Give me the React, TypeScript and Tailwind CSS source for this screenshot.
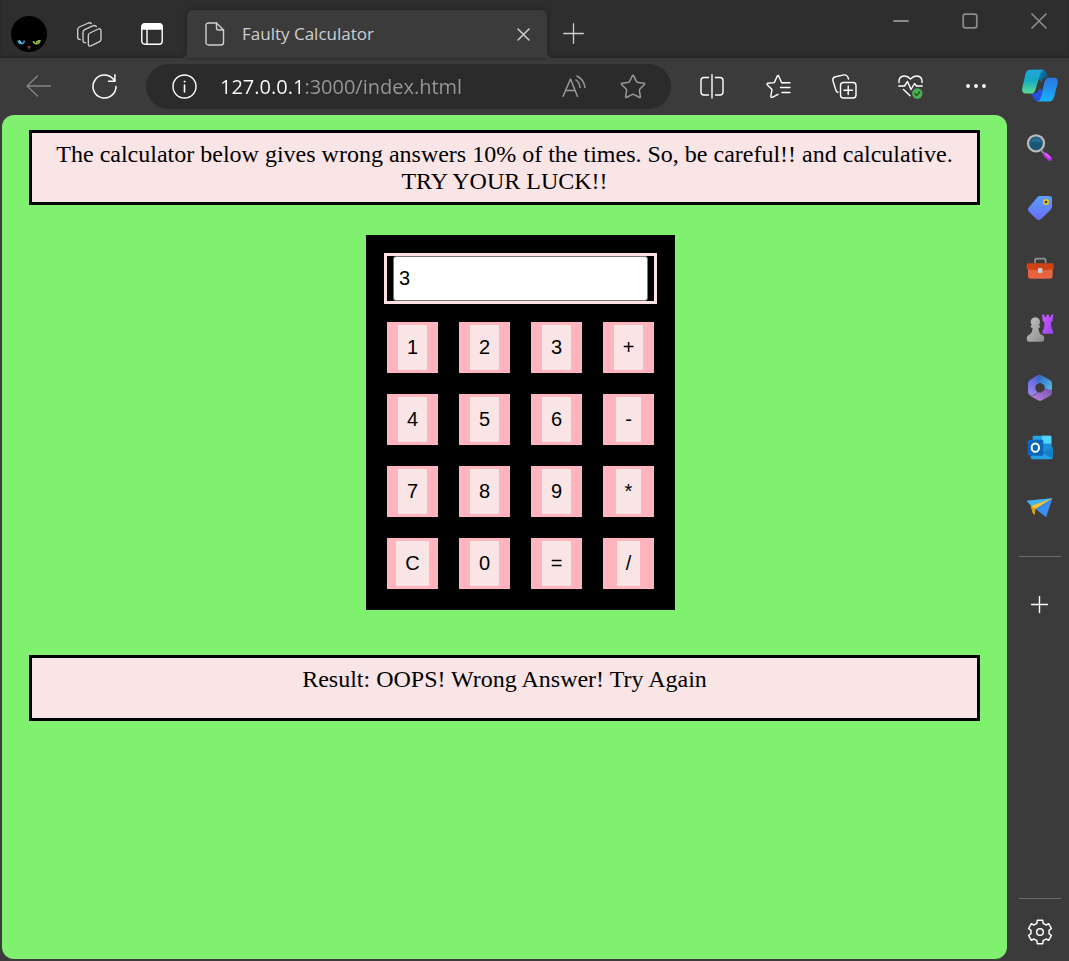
import { useState, type ReactNode } from "react";
import { Star } from "lucide-react";

type IconProps = { w: number; h: number; box: string; children: ReactNode; sw?: number };

function Icon({ w, h, box, children, sw = 1.3 }: IconProps) {
  return (
    <svg
      width={w}
      height={h}
      viewBox={box}
      fill="none"
      stroke="currentColor"
      strokeWidth={sw}
      strokeLinecap="round"
      strokeLinejoin="round"
      aria-hidden="true"
      className="shrink-0"
    >
      {children}
    </svg>
  );
}

function ToolButton({ label, children, className = "" }: { label: string; children: ReactNode; className?: string }) {
  return (
    <button type="button" aria-label={label} className={`flex h-11 w-[66px] shrink-0 items-center justify-center text-white ${className}`}>
      {children}
    </button>
  );
}

function Avatar() {
  return (
    <svg width="36" height="36" viewBox="0 0 36 36" aria-hidden="true">
      <circle cx="18" cy="18" r="18" fill="#000" />
      <path d="M7 24.500Q7.500 28 11 27.800Q13.500 27 13 24.500" fill="none" stroke="#2f9fd4" strokeWidth="1.600" />
      <path d="M8 24.500L10.500 27" fill="none" stroke="#9ae2fa" strokeWidth="1.200" />
      <path d="M29 24Q28.500 28 25 27.800Q22.500 27 22.500 25" fill="none" stroke="#8fc02f" strokeWidth="1.600" />
      <path d="M28 24.500L25 26.500" fill="none" stroke="#cdf56a" strokeWidth="1.200" />
      <path d="M15.800 30.200H20.200L18 32.500Z" fill="#a04a46" />
      <path d="M18 32V34" stroke="#6e302d" strokeWidth="1" />
    </svg>
  );
}

function TabStrip() {
  return (
    <header className="flex h-[58px] bg-[#2e2e2e] text-[#cfcfcf] shadow-[inset_0_-2px_2px_#262626]">
      <button type="button" aria-label="Profile" className="flex w-[58px] shrink-0 items-center pt-[10px] pl-[11px]">
        <Avatar />
      </button>
      <button type="button" aria-label="Workspaces" className="flex w-[62px] shrink-0 items-center justify-center pt-[10px]">
        <Icon w={25} h={25} box="0 0 75 75" sw={4}>
          <path d="M39 33L64 21Q72 18 72 27V52Q72 57 68 59L43 71Q34 75 34 66V40Q34 35 39 33Z" />
          <path d="M26 62Q18 63 18 54V31Q18 26 23 23L49 11Q55 9 58 14" />
          <path d="M10 53Q2 53 2 45V23Q2 18 7 15L34 3Q40 1 43 5" />
        </Icon>
      </button>
      <button type="button" aria-label="Tab actions" className="mr-[3px] flex w-16 shrink-0 items-center justify-center pt-[10px] text-white">
        <Icon w={22} h={22} box="0 0 22 22" sw={1.4}>
          <rect x="0.8" y="0.8" width="20.400" height="20.400" rx="3" />
          <path d="M1 6V4Q1 1 4 1H18Q21 1 21 4V6Z" fill="currentColor" />
          <path d="M6 7V21" />
        </Icon>
      </button>
      <div className="relative mt-[10px] flex w-[360px] min-w-0 items-center rounded-t-md bg-[#3b3b3b] pr-[15px] pl-[18px] shadow-[0_0_4px_#1c1c1c]">
        <span className="absolute bottom-0 -left-[5px] size-[5px] bg-[radial-gradient(circle_at_0_0,#2a2a2a_5px,#3b3b3b_5px)]" />
        <span className="absolute -right-[5px] bottom-0 size-[5px] bg-[radial-gradient(circle_at_100%_0,#2a2a2a_5px,#3b3b3b_5px)]" />
        <Icon w={20} h={24} box="0 0 20 24" sw={1.4}>
          <path d="M3.500 1H11.500L18.500 8V20.500Q18.500 23 16 23H3.500Q1 23 1 20.500V3.500Q1 1 3.500 1Z" />
          <path d="M11.500 1V6Q11.500 8 13.500 8H18.500" />
        </Icon>
        <span className="ml-[17px] flex-1 truncate font-['Open_Sans','Noto_Sans',sans-serif] text-[17px]">Faulty Calculator</span>
        <button type="button" aria-label="Close tab" className="p-[2px]">
          <Icon w={13} h={13} box="0 0 13 13" sw={1.5}>
            <path d="M1 1L12 12M12 1L1 12" />
          </Icon>
        </button>
      </div>
      <button type="button" aria-label="New tab" className="flex w-[52px] shrink-0 items-center justify-center pt-2">
        <Icon w={21} h={21} box="0 0 21 21">
          <path d="M10.500 0.700V20.300M0.700 10.500H20.300" />
        </Icon>
      </button>
      <div className="ml-auto flex shrink-0 items-start gap-[53px] pt-[13px] pr-[22px] text-[#8b8b8b]">
        <button type="button" aria-label="Minimize">
          <Icon w={16} h={16} box="0 0 16 16" sw={1.8}>
            <path d="M1 8H15" />
          </Icon>
        </button>
        <button type="button" aria-label="Maximize">
          <Icon w={16} h={16} box="0 0 16 16" sw={1.7}>
            <rect x="1.200" y="1.200" width="13.600" height="13.600" rx="2" />
          </Icon>
        </button>
        <button type="button" aria-label="Close">
          <Icon w={16} h={16} box="0 0 16 16" sw={1.7}>
            <path d="M1 1L15 15M15 1L1 15" />
          </Icon>
        </button>
      </div>
    </header>
  );
}

function Copilot() {
  return (
    <svg width="36" height="33" viewBox="0 0 108 98" aria-hidden="true">
      <defs>
        <linearGradient id="cpA" x1="0" y1="0" x2="0" y2="1">
          <stop offset="0" stopColor="#22a5dc" />
          <stop offset="0.450" stopColor="#16a9c4" />
          <stop offset="1" stopColor="#5edc8c" />
        </linearGradient>
        <linearGradient id="cpB" x1="0" y1="0" x2="0" y2="1">
          <stop offset="0" stopColor="#2f74dd" />
          <stop offset="1" stopColor="#17b1fb" />
        </linearGradient>
        <linearGradient id="cpC" x1="0" y1="0" x2="1" y2="0.600">
          <stop offset="0" stopColor="#1690cf" />
          <stop offset="1" stopColor="#0d5378" />
        </linearGradient>
      </defs>
      <path d="M40 2H60Q70 2 74 13L79 26H70Q62 26 58 40L50 30Z" fill="url(#cpC)" />
      <path d="M26 72H40Q48 71 52 58L60 60L58 96H47Q37 96 33 83Q31 75 26 72Z" fill="#2350dc" />
      <path d="M22 2H66Q58 4 54 17L40 63Q37 73 26 73H12Q-3 72 1 55L10 16Q13 3 22 2Z" fill="url(#cpA)" />
      <path d="M82 26H96Q110 27 107 42L96 84Q92 96 82 97H46Q54 95 57 83L68 37Q71 26 82 26Z" fill="url(#cpB)" />
    </svg>
  );
}

function Toolbar() {
  return (
    <nav aria-label="Browser toolbar" className="flex h-[57px] items-center bg-[#3b3b3b] pl-[5px]">
      <ToolButton label="Back" className="pb-[2px]">
        <Icon w={25} h={22} box="0 0 25 22">
          <path d="M24.500 11H1M11.500 1L1 11L11.500 21" stroke="#858585" />
        </Icon>
      </ToolButton>
      <ToolButton label="Refresh">
        <Icon w={25} h={25} box="0 0 25 25" sw={1.5}>
          <path d="M24 12.500A11.500 11.500 0 1 1 21 4.800L22.800 7" />
          <path d="M22.900 0.800V7.200H16.500" />
        </Icon>
      </ToolButton>
      <div className="ml-[9px] flex h-[45px] min-w-0 flex-1 items-center rounded-full bg-[#2b2b2b] pr-6 pl-[26px]">
        <button type="button" aria-label="Site information" className="text-white">
          <Icon w={25} h={25} box="0 0 25 25" sw={1.4}>
            <circle cx="12.500" cy="12.500" r="11.500" />
            <path d="M12.500 11V18" strokeWidth="1.600" />
            <circle cx="12.500" cy="7.600" r="0.600" fill="currentColor" strokeWidth="0.800" />
          </Icon>
        </button>
        <input
          aria-label="Address"
          defaultValue="127.0.0.1:3000/index.html"
          className="ml-[23px] min-w-0 flex-1 bg-[linear-gradient(90deg,#fff_83px,#989898_83px)] bg-clip-text font-['Open_Sans','Noto_Sans',sans-serif] text-[20px] text-transparent outline-none"
        />
        <button type="button" aria-label="Read aloud" className="pb-[2px] text-[#989898]">
          <Icon w={25} h={22} box="0 0 25 22" sw={1.5}>
            <path d="M1 21.500L8.500 4L15.500 21.500M3.500 15.500H13.300" />
            <path d="M14 5Q17.500 7.500 18 12.500M15 1Q22 4.500 23 12.500" />
          </Icon>
        </button>
        <button type="button" aria-label="Add to favorites" className="ml-8 text-[#989898]">
          <Star size={28} strokeWidth={1.3} />
        </button>
      </div>
      <div className="ml-2 flex shrink-0">
        <ToolButton label="Split screen">
          <Icon w={24} h={25} box="0 0 24 25" sw={1.4}>
            <path d="M8.500 21H4Q1 21 1 18V6.500Q1 3.500 4 3.500H8.500M15.500 3.500H20Q23 3.500 23 6.500V18Q23 21 20 21H15.500M12 0.800V24" />
          </Icon>
        </ToolButton>
        <ToolButton label="Favorites">
          <Icon w={25} h={25} box="0 0 25 25" sw={1.4}>
            <path d="M16.500 8.800L15.500 8.500L12.800 2.200Q12 0.800 11.200 2.200L8.300 8.600L1.500 9.300Q0.500 9.700 1.200 10.700L6 15.500L4.800 22.200Q4.800 23.800 6.300 23.300L12 20.300" />
            <path d="M16 8.800H24M14.500 13.500H24M16 18.500H24" />
          </Icon>
        </ToolButton>
        <ToolButton label="Collections">
          <Icon w={25} h={25} box="0 0 25 25" sw={1.4}>
            <rect x="8.500" y="8.500" width="15.500" height="15.500" rx="3" />
            <path d="M16.200 12V20.500M12 16.200H20.500" />
            <path d="M6 18.300Q4.500 18.300 4 16.500L1 7Q0.200 3.500 3.500 2.700L12 0.900Q14.800 0.500 15.800 3L16.500 5" />
          </Icon>
        </ToolButton>
        <ToolButton label="Browser essentials">
          <Icon w={25} h={25} box="0 0 25 25" sw={1.4}>
            <path d="M1 8.500Q0.500 2.500 6 2Q9.500 1.800 12.500 5Q15.500 1.800 19 2Q24.500 2.500 24 8.500" />
            <path d="M0.800 12H6.500L9.500 7.500L13 15.500L16.500 9.500L18.500 12H24.200M5.500 15.500L12 21.800" />
            <circle cx="19.300" cy="19.500" r="5.200" fill="#4cae50" stroke="none" />
            <path d="M17 19.800L18.600 21.400L21.700 18" stroke="#1d4d20" />
          </Icon>
        </ToolButton>
        <ToolButton label="Settings and more" className="pb-[2px]">
          <Icon w={20} h={4} box="0 0 20 4">
            <g fill="currentColor" stroke="none">
              <circle cx="2" cy="2" r="1.900" />
              <circle cx="10" cy="2" r="1.900" />
              <circle cx="18" cy="2" r="1.900" />
            </g>
          </Icon>
        </ToolButton>
      </div>
      <button type="button" aria-label="Copilot" className="flex w-[60px] shrink-0 justify-center pb-[2px] pl-[2px]">
        <Copilot />
      </button>
    </nav>
  );
}

function SearchGlass() {
  return (
    <svg width="28" height="28" viewBox="0 0 84 84" aria-hidden="true">
      <path d="M46 50L60 64" stroke="#8c8c8c" strokeWidth="6" />
      <path d="M58 62L71 74" stroke="#b92fe8" strokeWidth="13" strokeLinecap="round" />
      <path d="M59 60L71 70" stroke="#dc62fb" strokeWidth="5" strokeLinecap="round" />
      <circle cx="30" cy="28" r="24" fill="#1b5577" stroke="#b8b8b8" strokeWidth="7" />
      <path d="M14 26Q18 10 34 11Q46 14 46 28Q30 18 14 26Z" fill="#2a6d90" />
    </svg>
  );
}

function Tag() {
  return (
    <svg width="28" height="28" viewBox="0 0 84 84" aria-hidden="true">
      <defs>
        <linearGradient id="tagG" x1="0.500" y1="0" x2="0.500" y2="1">
          <stop offset="0" stopColor="#5aa0fa" />
          <stop offset="1" stopColor="#6a6bf5" />
        </linearGradient>
      </defs>
      <path d="M42 6H70Q78 6 78 14V38Q78 43 74 47L45 76Q38 81 32 76L9 53Q3 46 9 40L34 10Q37 6 42 6Z" fill="url(#tagG)" />
      <circle cx="60" cy="24" r="6.500" fill="#3a3a3a" stroke="#e8c51a" strokeWidth="5" />
    </svg>
  );
}

function Toolbox() {
  return (
    <svg width="28" height="28" viewBox="0 0 84 84" aria-hidden="true">
      <path d="M27 28V20Q27 14 33 14H53Q59 14 59 20V28" fill="none" stroke="#8d9498" strokeWidth="5" />
      <path d="M6 42H80V66Q80 74 72 74H14Q6 74 6 66Z" fill="#e8633f" />
      <path d="M5 28H79Q83 28 83 32V45Q60 49 42 49Q24 49 2 45V32Q2 28 5 28Z" fill="#cf4317" />
      <rect x="36" y="42" width="13" height="15" rx="2" fill="#c5cbce" />
    </svg>
  );
}

function Games() {
  return (
    <svg width="28" height="28" viewBox="0 0 84 84" aria-hidden="true">
      <defs>
        <linearGradient id="rookG" x1="0" y1="0" x2="1" y2="1">
          <stop offset="0" stopColor="#c75bfb" />
          <stop offset="1" stopColor="#9a45ee" />
        </linearGradient>
        <linearGradient id="pawnG" x1="0" y1="0" x2="1" y2="1">
          <stop offset="0" stopColor="#c4c4c4" />
          <stop offset="1" stopColor="#8c8c8c" />
        </linearGradient>
      </defs>
      <path d="M48 1L56 4V9H61V2H69V9H74V4L82 1L80 20L75 25Q75 43 80 49Q83 53 81 59H50Q48 52 51 48Q56 42 55 25L50 20Z" fill="url(#rookG)" />
      <path d="M28 10Q42 11 42 25Q42 30 38 33Q44 34 42 40L37 43Q38 54 44 61Q55 64 55 74Q55 82 48 83H9Q2 82 2 74Q2 65 12 61Q20 54 20 43L14 40Q12 34 18 33Q14 30 14 25Q14 11 28 10Z" fill="url(#pawnG)" />
    </svg>
  );
}

function Microsoft365() {
  return (
    <svg width="28" height="28" viewBox="0 0 84 84" aria-hidden="true">
      <defs>
        <linearGradient id="msA" x1="0.500" y1="0" x2="0.200" y2="1">
          <stop offset="0" stopColor="#5264df" />
          <stop offset="1" stopColor="#9e86e8" />
        </linearGradient>
        <linearGradient id="msB" x1="0" y1="0" x2="1" y2="1">
          <stop offset="0" stopColor="#2a5fb8" />
          <stop offset="1" stopColor="#58c5ee" />
        </linearGradient>
        <linearGradient id="msC" x1="0" y1="1" x2="1" y2="0">
          <stop offset="0" stopColor="#c18be2" />
          <stop offset="1" stopColor="#6c4aa8" />
        </linearGradient>
      </defs>
      <path d="M40 2Q44 2 50 6L73 19Q78 23 78 28V56L50 42L31 36V12Q33 5 40 2Z" fill="url(#msB)" />
      <path d="M78 42V57Q77 62 73 65L48 79Q42 82 36 79L12 65Q22 67 31 61L48 38L72 48Q76 49 78 42Z" fill="url(#msC)" />
      <path d="M40 2Q33 7 33 16V58L24 63Q14 68 8 60Q6 58 6 55V27Q7 21 12 18L35 4Q37 2 40 2Z" fill="url(#msA)" />
      <path d="M42 28L54 34V48L42 55L30 48V34Z" fill="#3b3b3b" stroke="#3b3b3b" strokeWidth="3" strokeLinejoin="round" />
    </svg>
  );
}

function Outlook() {
  return (
    <svg width="28" height="28" viewBox="0 0 84 84" aria-hidden="true">
      <rect x="20" y="5" width="56" height="48" rx="4" fill="#27a4e8" />
      <path d="M48 5H72Q76 5 76 9V29H48Z" fill="#51d5ff" />
      <path d="M48 29H76V50H48Z" fill="#1c8fd8" />
      <path d="M14 50L48 58L80 38V70Q80 76 74 76H20Q14 76 14 70Z" fill="#25a0e2" />
      <path d="M80 38V74L50 56Z" fill="#1280c8" />
      <rect x="5" y="17" width="47" height="48" rx="4" fill="#0a66bb" />
      <ellipse cx="28" cy="41" rx="11" ry="12.500" fill="none" stroke="#fff" strokeWidth="6" />
    </svg>
  );
}

function Drop() {
  return (
    <svg width="28" height="28" viewBox="0 0 84 84" aria-hidden="true">
      <path d="M2 20L79 13L60 69L38 52L26 42L16 36Z" fill="#2f86e8" />
      <path d="M2 20L79 13L18 38Z" fill="#45b4f4" />
      <path d="M79 13L32 47L60 69Z" fill="#3b8df0" />
      <path d="M79 13L15 36L20 56L26 63L28 45Z" fill="#f4c52c" />
      <path d="M15 36L28 45L26 63L19 54Z" fill="#d99a10" />
    </svg>
  );
}

const gearTooth = [
  [27.5, -20],
  [36, -13],
  [36, 13],
  [27.5, 20],
];

const gearPoints = [0, 60, 120, 180, 240, 300]
  .flatMap((turn) =>
    gearTooth.map(([radius, offset]) => {
      const angle = ((turn + offset) * Math.PI) / 180;
      return `${(42 + radius * Math.sin(angle)).toFixed(1)},${(42 - radius * Math.cos(angle)).toFixed(1)}`;
    }),
  )
  .join(" ");

function Gear() {
  return (
    <Icon w={28} h={28} box="0 0 84 84" sw={4.4}>
      <polygon points={gearPoints} />
      <circle cx="42" cy="42" r="10" />
    </Icon>
  );
}

const sidebarApps = [
  { name: "Search", icon: <SearchGlass /> },
  { name: "Shopping", icon: <Tag /> },
  { name: "Tools", icon: <Toolbox /> },
  { name: "Games", icon: <Games /> },
  { name: "Microsoft 365", icon: <Microsoft365 /> },
  { name: "Outlook", icon: <Outlook /> },
  { name: "Drop", icon: <Drop /> },
];

function Sidebar() {
  return (
    <aside aria-label="Sidebar" className="flex w-[62px] shrink-0 flex-col items-center pt-[19px] pb-[15px] pl-1 text-white">
      <div className="flex flex-col gap-8">
        {sidebarApps.map((app) => (
          <button key={app.name} type="button" aria-label={app.name}>
            {app.icon}
          </button>
        ))}
      </div>
      <hr className="mt-[34px] w-[42px] border-[#6b6b6b]" />
      <button type="button" aria-label="Customize sidebar" className="mt-[39px]">
        <Icon w={18} h={18} box="0 0 18 18" sw={1.4}>
          <path d="M8.500 0.500V16.500M0.500 8.500H16.500" />
        </Icon>
      </button>
      <hr className="mt-auto mb-[19px] w-[42px] border-[#6b6b6b]" />
      <button type="button" aria-label="Sidebar settings">
        <Gear />
      </button>
    </aside>
  );
}

const keys = ["1", "2", "3", "+", "4", "5", "6", "-", "7", "8", "9", "*", "C", "0", "=", "/"];

function compute(expression: string): number {
  const match = expression.match(/^(-?\d+)([-+*/])(\d+)$/);
  if (!match) return Number(expression);
  const a = Number(match[1]);
  const b = Number(match[3]);
  if (match[2] === "+") return a + b;
  if (match[2] === "-") return a - b;
  if (match[2] === "*") return a * b;
  return a / b;
}

function Calculator() {
  const [display, setDisplay] = useState("3");
  const [result, setResult] = useState("OOPS! Wrong Answer! Try Again");

  function press(key: string) {
    if (key === "C") {
      setDisplay("");
      setResult("");
    } else if (key === "=") {
      const answer = compute(display);
      const faulty = Math.random() < 0.1;
      setDisplay(String(faulty ? answer + 1 : answer));
      setResult(faulty ? "OOPS! Wrong Answer! Try Again" : "Correct Answer!");
    } else {
      setDisplay(display + key);
    }
  }

  return (
    <main className="mb-[2px] ml-[2px] min-w-0 flex-1 rounded-xl bg-[#7ff16e] px-[27px] pt-[15px] pb-8 text-black">
      <p className="border-[3px] border-black bg-[#f9e4e6] px-2 pt-2 pb-[7px] text-center font-['Liberation_Serif',serif] text-[24px] leading-[27px]">
        The calculator below gives wrong answers 10% of the times. So, be careful!! and calculative.
        <br />
        TRY YOUR LUCK!!
      </p>
      <div className="mt-[30px] flex justify-center pl-8 font-['Liberation_Sans',sans-serif] text-[20px]">
        <div className="bg-black p-[18px] pb-[21px]">
          <div className="border-[3px] border-[#ffe0e3] px-[6px]">
            <input
              aria-label="Calculator display"
              value={display}
              onChange={(event) => setDisplay(event.target.value)}
              className="block h-[45px] w-[255px] rounded-[3px] border border-[#767676] bg-white px-[5px] outline-none"
            />
          </div>
          <div className="mt-[18px] grid grid-cols-[repeat(4,51px)] gap-[21px] px-[3px]">
            {keys.map((key) => (
              <div key={key} className="flex h-[51px] justify-center bg-[#ffb4be] py-[3px]">
                <button type="button" onClick={() => press(key)} className="bg-[#f9e4e6] px-[9px] pb-[2px]">
                  {key}
                </button>
              </div>
            ))}
          </div>
        </div>
      </div>
      <p className="mt-[45px] border-[3px] border-black bg-[#f9e4e6] px-2 pt-2 pb-[25px] text-center font-['Liberation_Serif',serif] text-[24px] leading-[27px]">
        Result: {result}
      </p>
    </main>
  );
}

export default function App() {
  return (
    <div className="flex min-h-screen flex-col bg-[#3b3b3b]">
      <TabStrip />
      <Toolbar />
      <div className="flex flex-1">
        <Calculator />
        <Sidebar />
      </div>
    </div>
  );
}
